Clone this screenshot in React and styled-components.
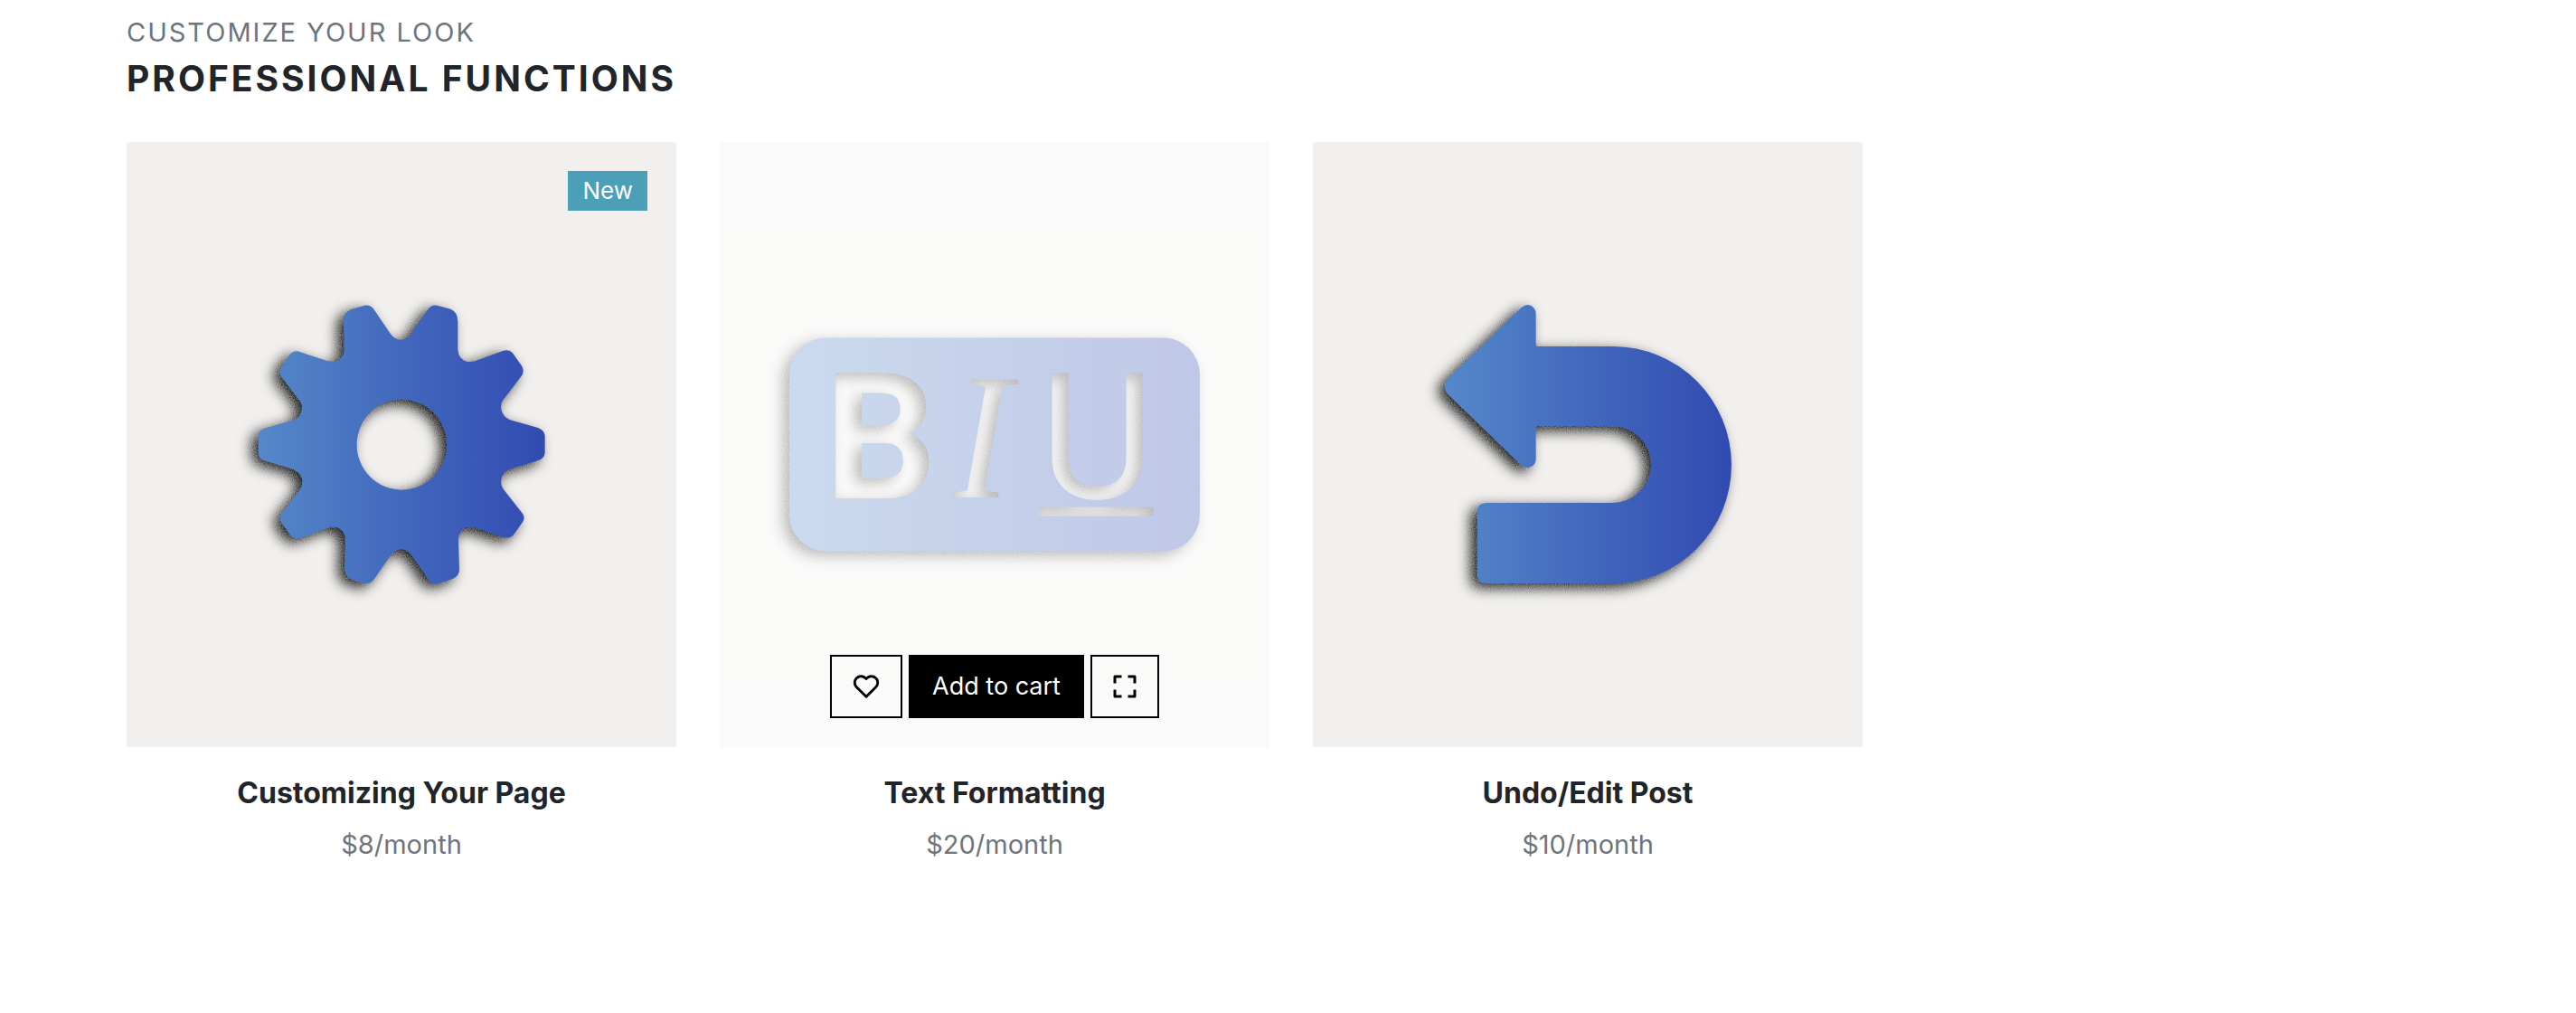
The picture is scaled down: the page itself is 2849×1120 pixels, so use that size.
import React from "react";
import styled, { createGlobalStyle } from "styled-components";
import { BiHeart } from "react-icons/bi";

const GlobalStyle = createGlobalStyle`
  *, *::before, *::after {
    box-sizing: border-box;
  }
  body {
    margin: 0;
    background: #fff;
    color: #212529;
    font-family: Inter, "Liberation Sans", Arial, sans-serif;
    font-size: 29px;
    line-height: 44px;
  }
`;

const Section = styled.section`
  padding: 14px 133px 48px 140px;
`;

const Header = styled.header`
  display: flex;
  flex-direction: column;
  gap: 6px;
  margin-bottom: 47px;
  text-transform: uppercase;
`;

const Eyebrow = styled.p`
  margin: 0;
  color: #6c757d;
  letter-spacing: 2px;
`;

const Heading = styled.h2`
  margin: 0;
  font-size: 39px;
  line-height: 46px;
  font-weight: 700;
  letter-spacing: 3px;
`;

const ProductGrid = styled.div`
  display: grid;
  grid-template-columns: repeat(4, minmax(0, 1fr));
  gap: 48px;
`;

const Card = styled.article`
  text-align: center;
`;

const Media = styled.div`
  position: relative;
`;

const Picture = styled.svg`
  display: block;
  width: 100%;
  height: auto;
  background: #f1f0ee;
  opacity: ${(p) => (p.$faded ? 0.3 : 1)};
`;

const Badge = styled.span`
  position: absolute;
  top: 32px;
  right: 32px;
  padding: 0 16px;
  background: #4b9fb6;
  color: #fff;
  font-size: 26px;
`;

const Actions = styled.div`
  position: absolute;
  inset: auto 0 32px;
  display: flex;
  justify-content: center;
  gap: 7px;
`;

const ActionButton = styled.button`
  display: flex;
  align-items: center;
  justify-content: center;
  height: 70px;
  padding: 0 ${(p) => (p.$solid ? 24 : p.$wide ? 21 : 23)}px;
  border: 2px solid #000;
  border-radius: 0;
  background: ${(p) => (p.$solid ? "#000" : "transparent")};
  color: ${(p) => (p.$solid ? "#fff" : "#000")};
  font: inherit;
  font-size: ${(p) => (p.$solid ? 27 : 29)}px;
  cursor: pointer;
`;

const ExpandSvg = styled.svg`
  display: block;
  width: 26px;
  height: 26px;
`;

const Title = styled.h3`
  margin: 31px 0 15px;
  font-size: 32px;
  line-height: 40px;
  font-weight: 700;
`;

const Price = styled.p`
  margin: 0;
  color: #6c757d;
`;

function ExpandIcon() {
  return (
    <ExpandSvg viewBox="0 0 26 26" fill="none" stroke="currentColor" strokeWidth="3" strokeLinejoin="round" aria-hidden="true">
      <path d="M2 9.5V2h7.5M16.500 2H24v7.500M24 16.500V24h-7.500M9.500 24H2v-7.500" />
    </ExpandSvg>
  );
}

/* Horizontal blue fade and the grainy drop shadow shared by all artwork. */
function ArtDefs({ id, from, to }) {
  return (
    <defs>
      <linearGradient id={`${id}-fill`} gradientUnits="userSpaceOnUse" x1={from} y1="0" x2={to} y2="0">
        <stop offset="0" stopColor="#5588c9" />
        <stop offset="0.5" stopColor="#4268bd" />
        <stop offset="1" stopColor="#314bb1" />
      </linearGradient>
      <filter id={`${id}-shadow`} filterUnits="userSpaceOnUse" x="-60" y="-60" width="1700" height="1240" colorInterpolationFilters="sRGB">
        <feGaussianBlur in="SourceAlpha" stdDeviation="22" />
        <feOffset dx="-20" dy="14" result="soft" />
        <feTurbulence type="fractalNoise" baseFrequency="0.31" numOctaves="1" seed="4" />
        <feColorMatrix type="matrix" values="0 0 0 0 0  0 0 0 0 0  0 0 0 0 0  0 0 0 2 -0.5" result="grain" />
        <feComposite in="soft" in2="grain" operator="arithmetic" k1="0.4" k2="0.65" result="shadow" />
        <feMerge>
          <feMergeNode in="shadow" />
          <feMergeNode in="SourceGraphic" />
        </feMerge>
      </filter>
    </defs>
  );
}

function GearArt() {
  return (
    <Picture viewBox="0 0 608 669" role="img" aria-label="Gear">
      <g transform="translate(110 153) scale(0.33333)">
        <ArtDefs id="gear" from={107} to={1058} />
        <g filter="url(#gear-shadow)">
          <path
            fill="url(#gear-fill)"
            fillRule="evenodd"
            d="M107 515Q108 498 126 491L228 462Q252 452 252 418Q251 410 246 402L182 318Q173 305 182 290L208 250Q220 235 235 235Q240 235 246 238L335 267Q350 271 368 267Q390 258 392 232L390 135Q390 105 416 96L460 83Q478 80 490 95L546 178Q560 197 580 197Q600 197 614 178L668 98Q680 80 700 83L745 95Q768 104 769 135L769 230Q772 262 800 270Q812 271 826 268L920 233Q940 228 952 242L982 285Q990 300 982 315L918 398Q905 420 920 445Q930 460 948 464L1035 489Q1056 497 1058 515L1058 572Q1056 590 1036 597L948 624Q905 640 914 680L920 692L985 775Q993 788 984 802L955 842Q942 858 920 852L830 822Q812 815 796 820Q772 830 771 860L774 960Q774 980 752 990L706 1005Q686 1010 672 992L616 912Q602 892 582 892Q562 892 546 912L492 990Q480 1008 458 1005L418 993Q393 982 393 955L396 860Q392 828 368 820Q350 816 335 822L250 855Q228 860 214 846L184 805Q175 790 183 775L246 692Q262 665 242 640Q232 630 215 624L126 598Q108 590 107 572ZM583 395A149 150 0 1 0 583 695A149 150 0 1 0 583 395Z"
          />
        </g>
      </g>
    </Picture>
  );
}

function FormattingArt() {
  return (
    <Picture viewBox="0 0 608 669" $faded role="img" aria-label="Bold, italic, underline">
      <g transform="translate(44 193) scale(0.33333)">
        <ArtDefs id="format" from={99} to={1461} />
        <mask id="format-cut" maskUnits="userSpaceOnUse" x="0" y="0" width="1560" height="900">
          <rect x="99" y="70" width="1362" height="709" rx="122" fill="#fff" />
          <text x="216" y="603" fontFamily="Roboto, sans-serif" fontWeight="700" fontSize="584">B</text>
          <text x="638" y="600" fontFamily="'Liberation Serif', serif" fontStyle="italic" fontSize="598">I</text>
          <text x="931" y="603" fontFamily="Roboto, sans-serif" fontSize="584">U</text>
          <rect x="928" y="632" width="379" height="30" />
        </mask>
        <g filter="url(#format-shadow)">
          <g mask="url(#format-cut)">
            <rect x="99" y="70" width="1362" height="709" fill="url(#format-fill)" />
          </g>
        </g>
      </g>
    </Picture>
  );
}

function UndoArt() {
  return (
    <Picture viewBox="0 0 608 669" role="img" aria-label="Undo arrow">
      <g transform="translate(108 153) scale(0.33333)">
        <ArtDefs id="undo" from={112} to={1065} />
        <g filter="url(#undo-shadow)">
          <path
            fill="url(#undo-fill)"
            d="M416 214Q416 219 421 219H672A393 393 0 0 1 672 1005H252Q221 1005 221 974V768Q221 738 252 738H671A127 127 0 0 0 671 484H421Q416 484 416 490V592Q416 608 404 616Q385 628 366 612L122 376Q104 352 122 328L366 92Q385 74 404 86Q416 95 416 110Z"
          />
        </g>
      </g>
    </Picture>
  );
}

const products = [
  { name: "Customizing Your Page", price: "$8/month", Art: GearArt, badge: "New" },
  { name: "Text Formatting", price: "$20/month", Art: FormattingArt, active: true },
  { name: "Undo/Edit Post", price: "$10/month", Art: UndoArt },
];

function ProductCard({ name, price, Art, badge, active }) {
  return (
    <Card>
      <Media>
        <Art />
        {badge && <Badge>{badge}</Badge>}
        {active && (
          <Actions>
            <ActionButton type="button" $wide aria-label="Add to wishlist">
              <BiHeart size={34} aria-hidden="true" />
            </ActionButton>
            <ActionButton type="button" $solid>Add to cart</ActionButton>
            <ActionButton type="button" aria-label="Quick view">
              <ExpandIcon />
            </ActionButton>
          </Actions>
        )}
      </Media>
      <Title>{name}</Title>
      <Price>{price}</Price>
    </Card>
  );
}

export default function App() {
  return (
    <>
      <GlobalStyle />
      <Section>
        <Header>
          <Eyebrow>Customize your look</Eyebrow>
          <Heading>Professional Functions</Heading>
        </Header>
        <ProductGrid>
          {products.map((product) => (
            <ProductCard key={product.name} {...product} />
          ))}
        </ProductGrid>
      </Section>
    </>
  );
}
